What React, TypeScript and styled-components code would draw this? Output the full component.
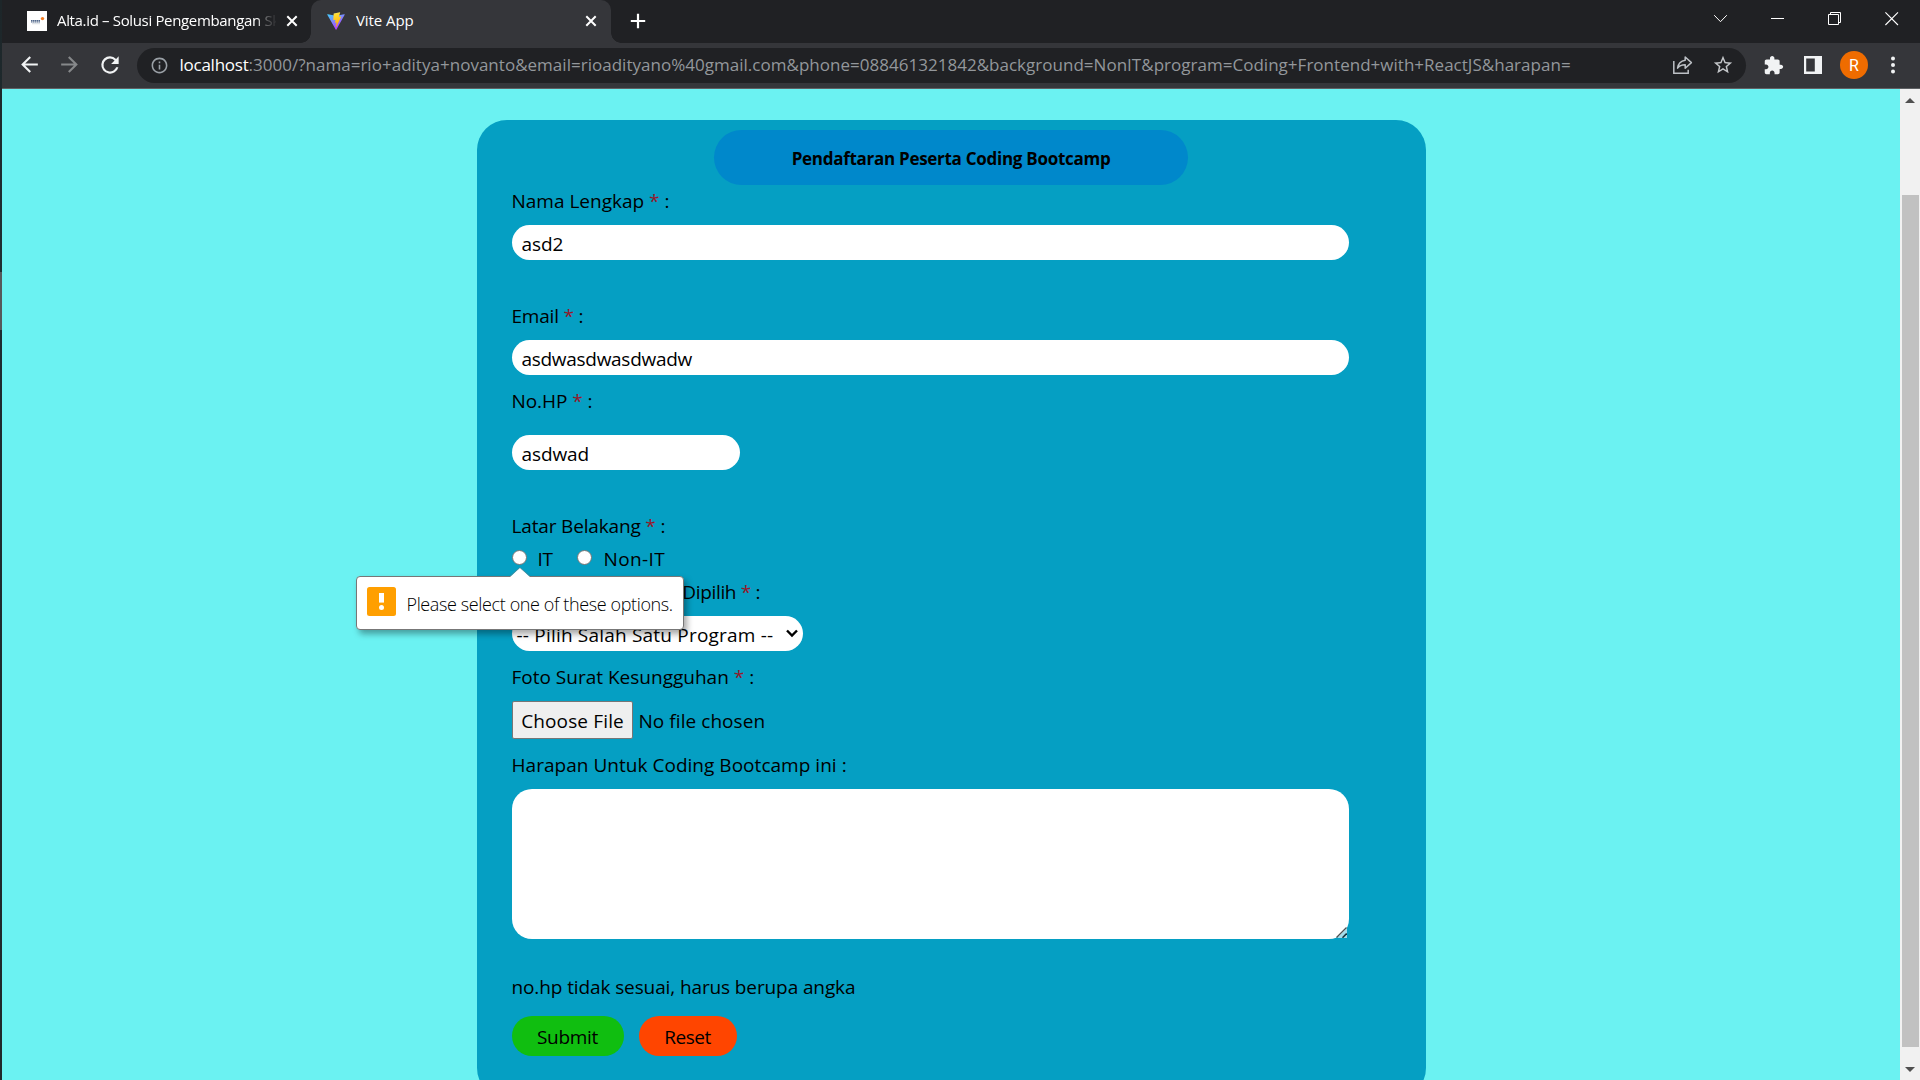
import React from 'react';
import styled, { createGlobalStyle, css } from 'styled-components';

const FONT = '"Open Sans", "Noto Sans", sans-serif';

const GlobalStyle = createGlobalStyle`
  *, *::before, *::after { box-sizing: border-box; }
  html, body { margin: 0; padding: 0; height: 100%; overflow: hidden; background: #202124; }
  body { font-family: ${FONT}; color: #000; }
`;

const Desktop = styled.div`
  display: flex;
  width: 1920px;
  height: 1080px;
  overflow: hidden;
`;

const DesktopEdge = styled.div`
  width: 2px;
  flex: none;
  background: linear-gradient(
    #1d2629 0, #1f2f33 272px, #56595b 272px, #56595b 330px, #1e2c30 330px, #20292c 100%
  );
`;

const BrowserWindow = styled.div`
  flex: 1;
  display: flex;
  flex-direction: column;
`;

/* ---------- tab strip ---------- */

const TabStrip = styled.div`
  display: flex;
  height: 43px;
  flex: none;
  background: #202124;
  color: #fff;
`;

const Tab = styled.div<{ $active?: boolean }>`
  position: relative;
  display: flex;
  align-items: center;
  height: 43px;
  width: ${(p) => (p.$active ? 300 : 309)}px;
  padding: 0 ${(p) => (p.$active ? 14 : 13)}px 2px ${(p) => (p.$active ? 15 : 25)}px;
  ${(p) =>
    p.$active &&
    css`
      background: #35363a;
      border-radius: 10px 10px 0 0;
      &::before,
      &::after {
        content: '';
        position: absolute;
        bottom: 0;
        width: 10px;
        height: 10px;
      }
      &::before {
        left: -10px;
        background: radial-gradient(circle at 0 0, transparent 9.5px, #35363a 10px);
      }
      &::after {
        right: -10px;
        background: radial-gradient(circle at 100% 0, transparent 9.5px, #35363a 10px);
      }
    `}
`;

const TabTitle = styled.span<{ $fade?: boolean }>`
  flex: 1;
  overflow: hidden;
  white-space: nowrap;
  font-size: 15px;
  line-height: 24px;
  padding-bottom: 2px;
  letter-spacing: ${(p) => (p.$fade ? -0.34 : -0.08)}px;
  margin: 0 ${(p) => (p.$fade ? 10 : 8)}px 0 ${(p) => (p.$fade ? 10 : 10)}px;
  ${(p) =>
    p.$fade &&
    css`
      mask-image: linear-gradient(90deg, #000 200px, rgba(0, 0, 0, 0.35) 208px, transparent 221px);
    `}
`;

const Favicon = styled.span`
  display: flex;
  width: 20px;
  height: 20px;
  background: #fff;
`;

const NewTab = styled.div`
  display: flex;
  align-items: center;
  padding: 0 0 1px 19px;
`;

const WindowControls = styled.div`
  display: flex;
  align-items: flex-start;
  gap: 43px;
  margin-left: auto;
  padding: 12px 21px 0 0;
`;

/* ---------- toolbar ---------- */

const Toolbar = styled.div`
  display: flex;
  align-items: center;
  height: 46px;
  flex: none;
  padding: 0 24px 1px 15px;
  background: #35363a;
  border-bottom: 1px solid #5f6164;
  color: #f1f3f4;
`;

const NavButtons = styled.div`
  display: flex;
  align-items: center;
  gap: 15px;
  width: 120px;
  padding-bottom: 1px;
`;

const Omnibox = styled.div`
  display: flex;
  align-items: center;
  width: 1609px;
  height: 35px;
  padding: 0 12px 0 13px;
  border-radius: 18px;
  background: #202124;
`;

const Url = styled.div`
  flex: 1;
  margin-left: 10.5px;
  padding-top: 0;
  font-size: 17px;
  line-height: 30px;
  white-space: nowrap;
  color: #93979b;
  letter-spacing: 0.02px;
`;

const Host = styled.span`
  color: #fff;
  letter-spacing: -0.25px;
`;

const OmniboxActions = styled.div`
  display: flex;
  align-items: center;
  gap: 18px;
`;

const Extensions = styled.div`
  display: flex;
  align-items: center;
  margin-left: auto;
`;

const Avatar = styled.div`
  display: flex;
  align-items: center;
  justify-content: center;
  width: 28px;
  height: 28px;
  margin: 0 22px 0 18px;
  border-radius: 50%;
  background: #ef6c00;
  color: #fff;
  font: 400 16px Roboto, sans-serif;
`;

/* ---------- page ---------- */

const Viewport = styled.div`
  flex: 1;
  display: flex;
  min-height: 0;
`;

const Page = styled.main`
  flex: 1;
  display: flex;
  justify-content: center;
  align-items: flex-start;
  padding-top: 31px;
  overflow: hidden;
  background: #6bf2f2;
`;

const Form = styled.form`
  display: flex;
  flex-direction: column;
  align-items: flex-start;
  width: 949px;
  height: 978px;
  flex: none;
  padding: 10px 35px;
  border-radius: 30px;
  background: #059fc3;
`;

const Title = styled.h1`
  align-self: center;
  width: 474px;
  height: 55px;
  margin: 0;
  border-radius: 28px;
  background: #0088cb;
  font-size: 17px;
  line-height: 57px;
  font-weight: 700;
  letter-spacing: -0.28px;
  text-align: center;
`;

const textLine = css<{ $track?: number }>`
  font-size: 19px;
  line-height: 30px;
  white-space: nowrap;
  letter-spacing: ${(p) => p.$track ?? 0}px;
`;

const Field = styled.div<{ $top: number; $gap?: number }>`
  display: flex;
  flex-direction: column;
  align-items: flex-start;
  gap: ${(p) => p.$gap ?? 9}px;
  margin-top: ${(p) => p.$top}px;
`;

const Label = styled.label<{ $track?: number }>`
  ${textLine}
`;

const Star = styled.span`
  color: #94182a;
`;

const control = css`
  border: 0;
  outline: 0;
  margin: 0;
  background: #fff;
  color: #000;
  font-family: ${FONT};
`;

const TextInput = styled.input<{ $short?: boolean; $track?: number }>`
  ${control}
  ${textLine}
  width: ${(p) => (p.$short ? 228 : 837)}px;
  height: 35px;
  padding: 3px 9px 0 10px;
  border-radius: 17.5px;
`;

const RadioRow = styled.div`
  display: flex;
  align-items: center;
  height: 30px;
  margin-top: 3px;
`;

const Radio = styled.input`
  width: 15px;
  height: 15px;
  margin: 0 11px 3px 0;
  appearance: none;
  border: 1px solid #767676;
  border-radius: 50%;
  background: #fff;
`;

const RadioLabel = styled.label<{ $track?: number; $after?: number }>`
  ${textLine}
  margin-right: ${(p) => p.$after ?? 0}px;
`;

/* The hint bubble floats over the fields below the first radio. */
const Anchor = styled.span`
  position: relative;
  display: flex;
`;

const Bubble = styled.div`
  position: absolute;
  z-index: 2;
  top: 26px;
  left: -156px;
  display: flex;
  align-items: center;
  width: 328px;
  height: 54px;
  padding-left: 10px;
  border: 1px solid #777;
  border-radius: 4px;
  background: #fff;
  box-shadow: 3px 4px 6px rgba(0, 0, 0, 0.35);
`;

const BubbleTip = styled.svg`
  position: absolute;
  left: 152px;
  top: -10px;
`;

const BubbleIcon = styled.svg`
  flex: none;
  margin-bottom: 3px;
`;

const BubbleText = styled.span`
  margin-left: 11px;
  padding-top: 1px;
  font-size: 18px;
  font-weight: 300;
  line-height: 28px;
  letter-spacing: -0.38px;
  white-space: nowrap;
  color: #000;
`;

const SelectBox = styled.div`
  display: flex;
  align-items: center;
  justify-content: space-between;
  width: 291px;
  height: 35px;
  padding: 0 5px 0 5px;
  border-radius: 17.5px;
  background: #fff;
`;

const SelectValue = styled.span<{ $track?: number }>`
  ${textLine}
  padding-top: 3px;
`;

const FileRow = styled.div`
  display: flex;
  align-items: center;
  gap: 6px;
`;

const FileButton = styled.button<{ $track?: number }>`
  ${control}
  ${textLine}
  width: 121px;
  height: 38px;
  padding: 1px 0 0 1px;
  border: 1px solid #767676;
  border-radius: 2px;
  background: #efefef;
  text-align: center;
`;

const FileName = styled.span<{ $track?: number }>`
  ${textLine}
  padding-top: 2px;
`;

const Message = styled.p<{ $track?: number }>`
  ${textLine}
  margin: 33px 0 0;
`;

const AreaWrap = styled.div`
  position: relative;
  display: flex;
`;

const TextArea = styled.textarea`
  ${control}
  width: 837px;
  height: 150px;
  border-radius: 20px;
  resize: none;
`;

const Grip = styled.svg`
  position: absolute;
  right: 2px;
  bottom: 1px;
`;

const Buttons = styled.div`
  display: flex;
  gap: 15px;
  margin-top: 14px;
`;

const ActionButton = styled.button<{ $width: number; $color: string; $track?: number }>`
  ${control}
  ${textLine}
  width: ${(p) => p.$width}px;
  height: 40px;
  padding: 1px 0 0;
  border-radius: 20px;
  background: ${(p) => p.$color};
  text-align: center;
`;

/* ---------- scrollbar ---------- */

const ScrollTrack = styled.div`
  display: flex;
  flex-direction: column;
  align-items: center;
  width: 20px;
  flex: none;
  padding: 9px 0 8px;
  background: #f1f1f1;
`;

const ScrollThumb = styled.div`
  width: 17px;
  height: 852px;
  margin: 92px 0 auto 1px;
  background: #c1c1c1;
`;

const TabClose = () => (
  <svg width="12" height="12" viewBox="0 0 12 12" stroke="#fff" strokeWidth="2">
    <path d="M1.3 1.3l9.4 9.4M10.7 1.3l-9.4 9.4" />
  </svg>
);

const Glyph = ({ d, size, fill = '#f1f3f4' }: { d: string; size: number; fill?: string }) => (
  <svg width={size} height={size} viewBox="0 0 24 24" fill={fill}>
    <path d={d} />
  </svg>
);

const BACK = 'M20 11H7.83l5.59-5.59L12 4l-8 8 8 8 1.41-1.41L7.83 13H20v-2z';
const FORWARD = 'M4 11h12.17l-5.59-5.59L12 4l8 8-8 8-1.41-1.41L16.17 13H4v-2z';
const RELOAD =
  'M17.65 6.35A7.958 7.958 0 0 0 12 4a8 8 0 1 0 7.73 10h-2.08A5.99 5.99 0 1 1 12 6c1.66 0 3.14.69 4.22 1.78L13 11h7V4l-2.35 2.35z';
const INFO =
  'M11 7h2v2h-2zm0 4h2v6h-2zm1-9C6.48 2 2 6.48 2 12s4.48 10 10 10 10-4.48 10-10S17.52 2 12 2zm0 18c-4.41 0-8-3.59-8-8s3.59-8 8-8 8 3.59 8 8-3.59 8-8 8z';
const STAR =
  'M22 9.24l-7.19-.62L12 2 9.19 8.63 2 9.24l5.46 4.73L5.82 21 12 17.27 18.18 21l-1.63-7.03L22 9.24zM12 15.4l-3.76 2.27 1-4.28-3.32-2.88 4.38-.38L12 6.1l1.71 4.04 4.38.38-3.32 2.88 1 4.28L12 15.4z';
const PUZZLE =
  'M20.5 11H19V7c0-1.1-.9-2-2-2h-4V3.5C13 2.12 11.88 1 10.5 1S8 2.12 8 3.5V5H4c-1.1 0-1.99.9-1.99 2v3.8H3.5c1.49 0 2.7 1.21 2.7 2.7s-1.21 2.7-2.7 2.7H2V20c0 1.1.9 2 2 2h3.8v-1.5c0-1.49 1.21-2.7 2.7-2.7 1.49 0 2.7 1.21 2.7 2.7V22H17c1.1 0 2-.9 2-2v-4h1.5c1.38 0 2.5-1.12 2.5-2.5S21.88 11 20.5 11z';

const ViteLogo = () => (
  <svg width="20" height="20" viewBox="0 0 32 32">
    <defs>
      <linearGradient id="vite-v" x1="0" y1="0" x2="0.6" y2="1">
        <stop offset="0" stopColor="#41d1ff" />
        <stop offset="1" stopColor="#bd34fe" />
      </linearGradient>
      <linearGradient id="vite-bolt" x1="0.4" y1="0" x2="0.6" y2="1">
        <stop offset="0" stopColor="#ffea83" />
        <stop offset="0.1" stopColor="#ffdd35" />
        <stop offset="1" stopColor="#ffa800" />
      </linearGradient>
    </defs>
    <path
      fill="url(#vite-v)"
      d="M29.884 6.146l-13.142 23.5a.714.714 0 0 1-1.244.005L2.096 6.148a.714.714 0 0 1 .746-1.057l13.156 2.352a.714.714 0 0 0 .253 0l12.881-2.348a.714.714 0 0 1 .752 1.051z"
    />
    <path
      fill="url(#vite-bolt)"
      d="M22.264 2.007l-9.726 1.906a.357.357 0 0 0-.288.329l-.598 10.104a.357.357 0 0 0 .437.369l2.707-.625a.357.357 0 0 1 .43.42l-.804 3.939a.357.357 0 0 0 .454.413l1.672-.508a.357.357 0 0 1 .454.414l-1.279 6.187c-.08.387.435.598.65.267l.143-.222 7.925-15.815a.357.357 0 0 0-.387-.51l-2.787.537a.357.357 0 0 1-.41-.45l1.818-6.306a.357.357 0 0 0-.412-.45z"
    />
  </svg>
);

const Required = () => (
  <>
    {' '}
    <Star>*</Star> :
  </>
);

export default function App() {
  return (
    <Desktop>
      <GlobalStyle />
      <DesktopEdge />
      <BrowserWindow>
        <TabStrip>
          <Tab>
            <Favicon>
              <svg width="20" height="20" viewBox="0 0 20 20">
                <path d="M4 9.6h9M4 11h9" stroke="#53698c" strokeWidth="1.2" strokeDasharray="1.6 .4" />
                <path d="M5 12.7h8" stroke="#c9ced6" strokeWidth=".7" />
                <circle cx="15.5" cy="7.6" r="1.7" fill="#f47b20" />
              </svg>
            </Favicon>
            <TabTitle $fade>Alta.id – Solusi Pengembangan Sk</TabTitle>
            <TabClose />
          </Tab>
          <Tab $active>
            <ViteLogo />
            <TabTitle>Vite App</TabTitle>
            <TabClose />
          </Tab>
          <NewTab>
            <svg width="16" height="16" viewBox="0 0 16 16" stroke="#fff" strokeWidth="2.2">
              <path d="M8 .8v14.4M.8 8h14.4" />
            </svg>
          </NewTab>
          <WindowControls>
            <svg width="14" height="14" viewBox="0 0 14 14" fill="none" stroke="#fff">
              <path d="M.2 3.2l6.3 6.5 6.3-6.5" />
            </svg>
            <svg width="14" height="14" viewBox="0 0 14 14" stroke="#fff">
              <path d="M0 6.5h13" />
            </svg>
            <svg width="14" height="14" viewBox="0 0 14 14" fill="none" stroke="#fff">
              <path d="M.5 2.5h10v10H.5zM2.5 2.5v-2h10v10h-2" />
            </svg>
            <svg width="14" height="14" viewBox="0 0 14 14" stroke="#fff" strokeWidth="1.1">
              <path d="M.4.4L13 13M13 .4L.4 13" />
            </svg>
          </WindowControls>
        </TabStrip>

        <Toolbar>
          <NavButtons>
            <Glyph d={BACK} size={25} />
            <Glyph d={FORWARD} size={25} fill="#86888a" />
            <Glyph d={RELOAD} size={26} />
          </NavButtons>
          <Omnibox>
            <Glyph d={INFO} size={19} fill="#9aa0a6" />
            <Url>
              <Host>localhost</Host>
              :3000/?nama=rio+aditya+novanto&amp;email=rioadityano%40gmail.com&amp;phone=088461321842&amp;background=NonIT&amp;program=Coding+Frontend+with+ReactJS&amp;harapan=
            </Url>
            <OmniboxActions>
              <svg width="22" height="20" viewBox="0 0 22 20" fill="none" stroke="#bdc1c6" strokeWidth="1.5">
                <path d="M1.8 6v12.2h14.4v-3.4" />
                <path
                  d="M13.2 5.2V2l6.2 5.6-6.2 5.6V9.8c-3.6 0-6 1-7.6 3.4.5-4.2 3-7.4 7.6-8z"
                  strokeLinejoin="round"
                />
              </svg>
              <Glyph d={STAR} size={22} fill="#c4c7ca" />
            </OmniboxActions>
          </Omnibox>
          <Extensions>
            <Glyph d={PUZZLE} size={21} />
            <svg width="38" height="18" viewBox="0 0 38 18">
              <path fill="#f1f3f4" d="M20 0h18v18H20zM22.2 2.4v13.2h8.6V2.4z" fillRule="evenodd" />
            </svg>
            <Avatar>R</Avatar>
            <svg width="6" height="18" viewBox="0 0 6 18" fill="#f1f3f4">
              <circle cx="3" cy="2.6" r="2" />
              <circle cx="3" cy="9" r="2" />
              <circle cx="3" cy="15.4" r="2" />
            </svg>
          </Extensions>
        </Toolbar>

        <Viewport>
          <Page>
            <Form>
              <Title>Pendaftaran Peserta Coding Bootcamp</Title>
              <Field $top={1}>
                <Label>
                  Nama Lengkap
                  <Required />
                </Label>
                <TextInput readOnly value="asd2" $track={-0.08} />
              </Field>
              <Field $top={41}>
                <Label $track={-0.2}>
                  Email
                  <Required />
                </Label>
                <TextInput readOnly value="asdwasdwasdwadw" $track={-0.29} />
              </Field>
              <Field $top={11} $gap={19}>
                <Label $track={-0.06}>
                  No.HP
                  <Required />
                </Label>
                <TextInput readOnly $short value="asdwad" $track={-0.1} />
              </Field>
              <Field $top={41} $gap={0}>
                <Label $track={-0.16}>
                  Latar Belakang
                  <Required />
                </Label>
                <RadioRow>
                  <Anchor>
                    <Radio type="radio" name="background" />
                    <Bubble>
                      <BubbleTip width="22" height="11" viewBox="0 0 22 11">
                        <path d="M0 11L11 .7 22 11z" fill="#fff" />
                        <path d="M.5 9.5L10.8.7 21.5 9.5" fill="none" stroke="#777" strokeWidth=".5" />
                      </BubbleTip>
                      <BubbleIcon width="29" height="29" viewBox="0 0 29 29">
                        <rect width="29" height="29" rx="2.5" fill="#ff9f00" />
                        <path d="M12 6h5v9.6h-5z" fill="#fff" />
                        <circle cx="14.5" cy="20.4" r="2.5" fill="#fff" />
                      </BubbleIcon>
                      <BubbleText>Please select one of these options.</BubbleText>
                    </Bubble>
                  </Anchor>
                  <RadioLabel $track={-0.4} $after={25}>
                    IT
                  </RadioLabel>
                  <Radio type="radio" name="background" />
                  <RadioLabel $track={0.4}>Non-IT</RadioLabel>
                </RadioRow>
              </Field>
              <Field $top={3}>
                <Label $track={-0.32}>
                  Program yang akan Dipilih
                  <Required />
                </Label>
                <SelectBox>
                  <SelectValue $track={0.2}>-- Pilih Salah Satu Program --</SelectValue>
                  <svg width="12" height="9" viewBox="0 0 12 9" fill="none" stroke="#000" strokeWidth="2.4">
                    <path d="M1 1.5l5 5 5-5" />
                  </svg>
                </SelectBox>
              </Field>
              <Field $top={11}>
                <Label>
                  Foto Surat Kesungguhan
                  <Required />
                </Label>
                <FileRow>
                  <FileButton type="button" $track={0.14}>
                    Choose File
                  </FileButton>
                  <FileName $track={0.06}>No file chosen</FileName>
                </FileRow>
              </Field>
              <Field $top={11}>
                <Label $track={0.03}>Harapan Untuk Coding Bootcamp ini :</Label>
                <AreaWrap>
                  <TextArea readOnly value="" />
                  <Grip width="11" height="11" viewBox="0 0 11 11">
                    <path d="M11 1v10H1z" fill="#a5dcea" />
                    <path d="M.5 10.5L10.5 .5" stroke="#4d5052" strokeWidth="1.3" />
                    <path d="M6.5 10.7L10.7 6.5" stroke="#15333c" strokeWidth="1.6" />
                  </Grip>
                </AreaWrap>
              </Field>
              <Message $track={-0.11}>no.hp tidak sesuai, harus berupa angka</Message>
              <Buttons>
                <ActionButton type="button" $width={112} $color="#10be10" $track={-0.3}>
                  Submit
                </ActionButton>
                <ActionButton type="button" $width={98} $color="#ff4500" $track={-0.5}>
                  Reset
                </ActionButton>
              </Buttons>
            </Form>
          </Page>
          <ScrollTrack>
            <svg width="10" height="5" viewBox="0 0 10 5" fill="#505050">
              <path d="M5 0l5 5H0z" />
            </svg>
            <ScrollThumb />
            <svg width="10" height="5" viewBox="0 0 10 5" fill="#505050">
              <path d="M0 0h10L5 5z" />
            </svg>
          </ScrollTrack>
        </Viewport>
      </BrowserWindow>
    </Desktop>
  );
}
